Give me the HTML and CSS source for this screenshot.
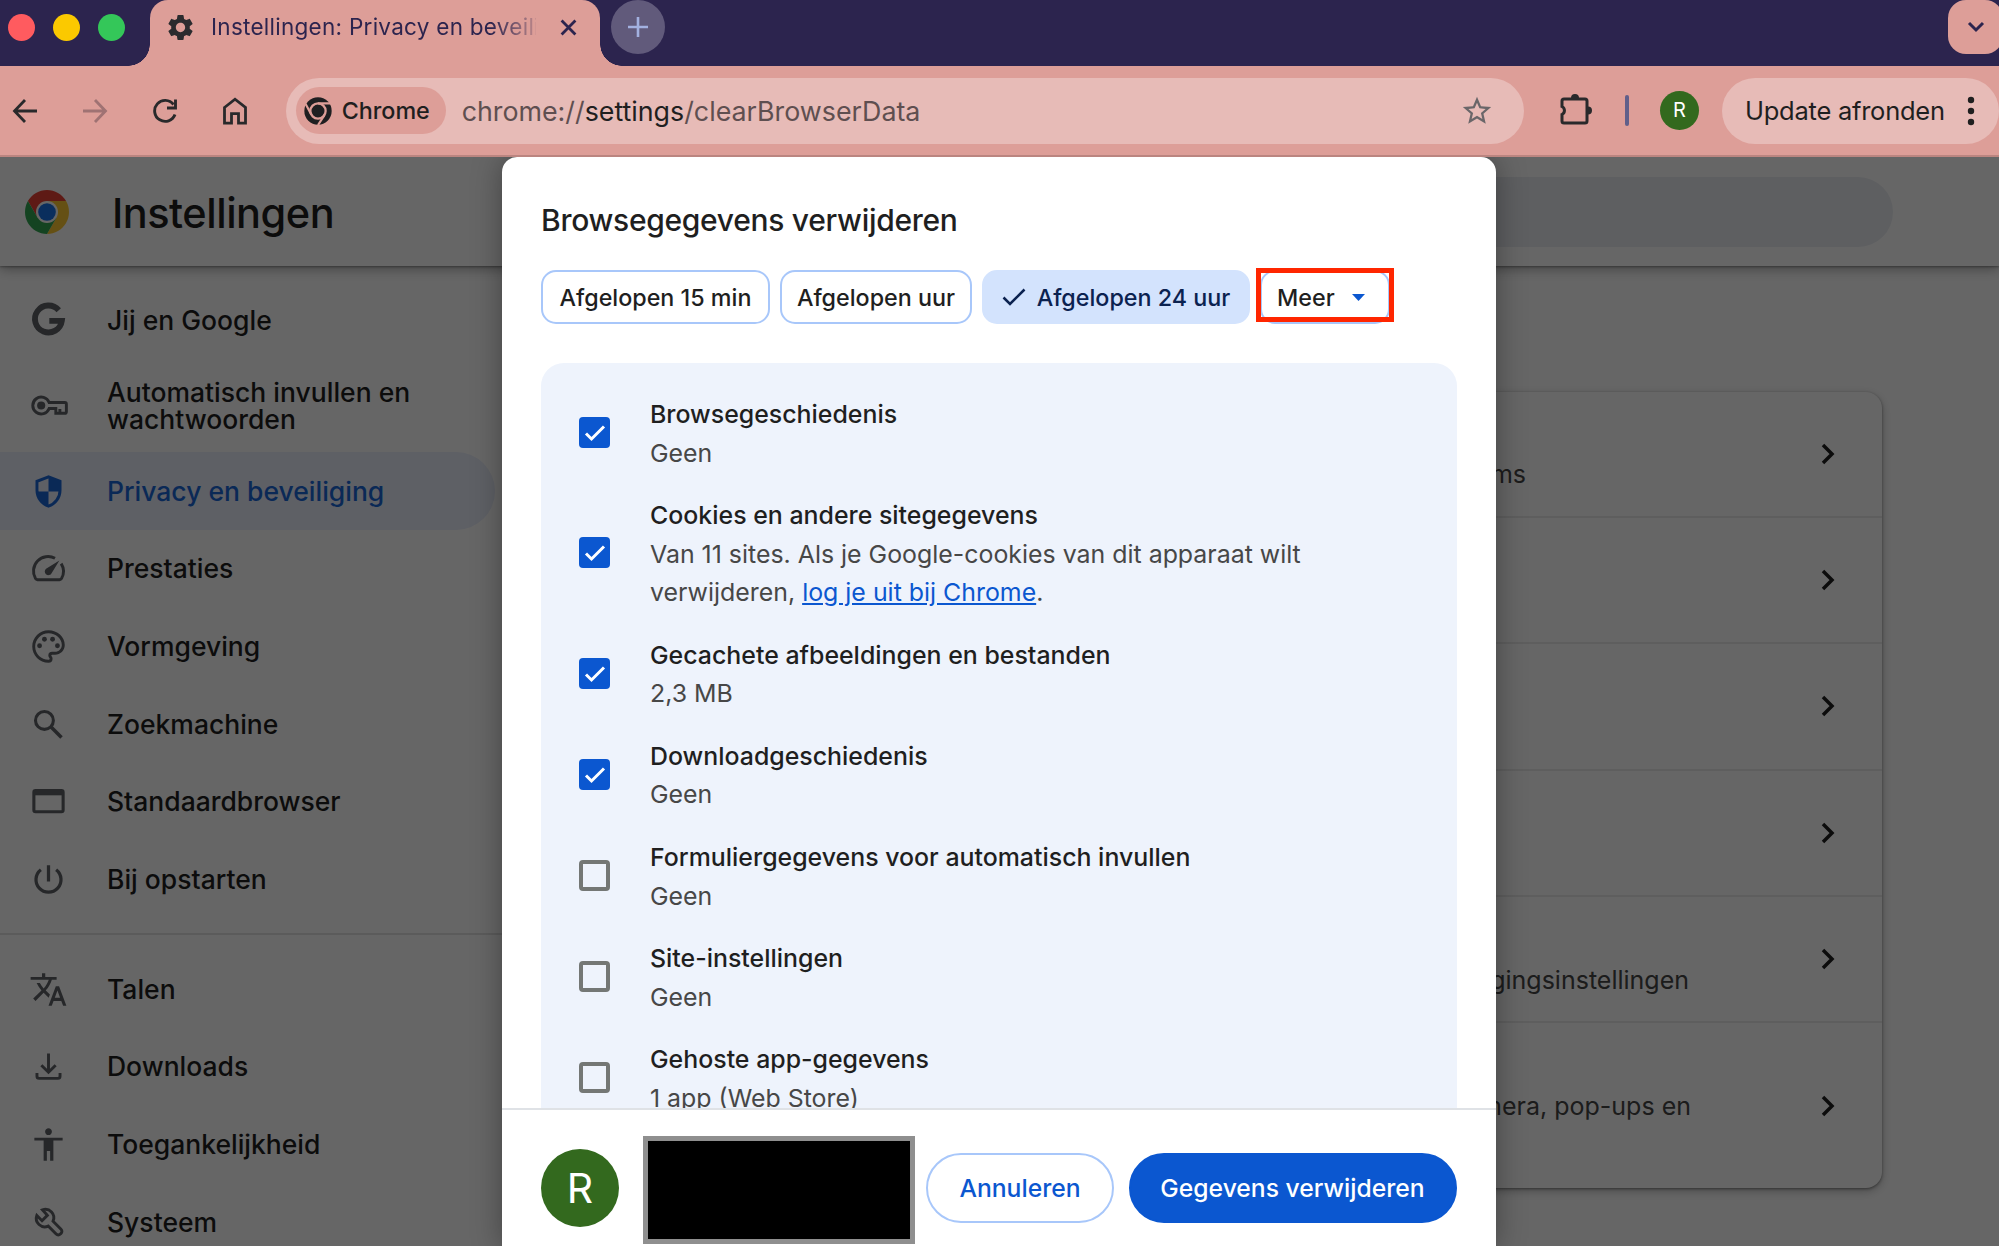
FILE: index.html
```
<!DOCTYPE html>
<html lang="nl">
<head>
    <meta charset="UTF-8" />
    <meta name="viewport" content="width=device-width, initial-scale=1.0" />
    <title>Instellingen: Privacy en beveiliging</title>
    <link rel="stylesheet" href="styles.css">
</head>
<body>
    <div class="tabstrip">
        <div class="lights">
            <span class="light red"></span>
            <span class="light yellow"></span>
            <span class="light green"></span>
        </div>
        <div class="tab">
            <svg class="tab-icon" viewBox="0 0 24 24"><path fill="#2b2b2e" d="M19.14 12.94c.04-.3.06-.61.06-.94 0-.32-.02-.64-.07-.94l2.03-1.58c.18-.14.23-.41.12-.61l-1.92-3.32c-.12-.22-.37-.29-.59-.22l-2.39.96c-.5-.38-1.03-.7-1.62-.94L14.4 2.81c-.04-.24-.24-.41-.48-.41h-3.84c-.24 0-.43.17-.47.41l-.36 2.54c-.59.24-1.13.57-1.62.94l-2.39-.96c-.22-.08-.47 0-.59.22L2.74 8.87c-.12.21-.08.47.12.61l2.03 1.58c-.05.3-.09.63-.09.94s.02.64.07.94l-2.03 1.58c-.18.14-.23.41-.12.61l1.92 3.32c.12.22.37.29.59.22l2.39-.96c.5.38 1.03.7 1.62.94l.36 2.54c.05.24.24.41.48.41h3.84c.24 0 .44-.17.47-.41l.36-2.54c.59-.24 1.13-.56 1.62-.94l2.39.96c.22.08.47 0 .59-.22l1.92-3.32c.12-.22.07-.47-.12-.61l-2.01-1.58zM12 15.6c-1.98 0-3.6-1.62-3.6-3.6s1.62-3.6 3.6-3.6 3.6 1.62 3.6 3.6-1.62 3.6-3.6 3.6z"/></svg>
            <span class="tab-title">Instellingen: Privacy en beveiliging</span>
            <svg class="tab-close" viewBox="0 0 16 16"><path d="M1.5 1.5l13 13M14.5 1.5l-13 13" stroke="#2c244e" stroke-width="2.6"/></svg>
        </div>
        <div class="new-tab">
            <svg width="20" height="20" viewBox="0 0 20 20"><path d="M10 0v20M0 10h20" stroke="#a3b1e0" stroke-width="2.6"/></svg>
        </div>
        <div class="tab-search">
            <svg width="18" height="12" viewBox="0 0 18 12"><path d="M2 2l7 7 7-7" fill="none" stroke="#2c244e" stroke-width="3"/></svg>
        </div>
    </div>

    <div class="toolbar">
        <div class="nav-buttons">
            <svg width="26" height="26" viewBox="0 0 26 26"><path d="M25 13H3M13 2L2.500 13 13 24" fill="none" stroke="#29292b" stroke-width="2.8"/></svg>
            <svg width="26" height="26" viewBox="0 0 26 26"><path d="M1 13h22M13 2l10.500 11L13 24" fill="none" stroke="#9f7273" stroke-width="2.8"/></svg>
            <svg width="26" height="26" viewBox="0 0 26 26"><path d="M23 16.500A10.500 10.500 0 1 1 21.500 6.500M23.500 1.500v8.500H15" fill="none" stroke="#29292b" stroke-width="2.9"/></svg>
            <svg width="26" height="28" viewBox="0 0 26 28"><path d="M2.500 10.500L13 2.200l10.500 8.300v15.700h-7v-9.500h-7v9.500h-7z" fill="none" stroke="#29292b" stroke-width="2.8"/></svg>
        </div>
        <div class="omnibox">
            <div class="chip-chrome">
                <svg width="28" height="28" viewBox="-22 -22 44 44">
                    <circle r="21.500" fill="#1f1f21"/>
                    <circle r="12" fill="none" stroke="#dd9e98" stroke-width="3.600"/>
                    <path d="M0-12h19M10.400 6L0 22M-10.400 6l-9-17" stroke="#dd9e98" stroke-width="3.400"/>
                </svg>
                <span>Chrome</span>
            </div>
            <span class="url">chrome://<b>settings</b>/clearBrowserData</span>
            <svg class="star" width="34" height="34" viewBox="0 0 24 24"><path fill="#6a6669" d="M22 9.240l-7.190-.62L12 2 9.190 8.630 2 9.240l5.460 4.730L5.820 21 12 17.270 18.180 21l-1.630-7.030L22 9.240zM12 15.400l-3.760 2.270 1-4.280-3.320-2.880 4.380-.38L12 6.100l1.710 4.040 4.380.38-3.320 2.880 1 4.280L12 15.400z"/></svg>
        </div>
        <svg class="puzzle" width="32" height="32" viewBox="0 0 32 32">
            <path d="M4 6h21a2 2 0 0 1 2 2v20a2 2 0 0 1-2 2H4a2 2 0 0 1-2-2v-6.500a4.500 4.500 0 0 0 0-8V8a2 2 0 0 1 2-2z" fill="none" stroke="#29292b" stroke-width="3"/>
            <path d="M11 5a4 4 0 0 1 8 0zM28 13.500a4 4 0 0 1 0 8z" fill="#29292b"/>
        </svg>
        <span class="separator"></span>
        <span class="avatar-small">R</span>
        <div class="update">
            <span>Update afronden</span>
            <svg width="8" height="32" viewBox="0 0 8 32" fill="#1f1f1f"><circle cx="4" cy="5" r="3.200"/><circle cx="4" cy="16" r="3.200"/><circle cx="4" cy="27" r="3.200"/></svg>
        </div>
    </div>

    <div class="page">
        <header class="page-header">
            <svg width="44" height="44" viewBox="-22 -22 44 44">
                <path fill="#ea4335" d="M-19.050-11A22 22 0 0 1 19.050-11L0-11-9.530 5.500z"/>
                <path fill="#fcc934" d="M19.050-11A22 22 0 0 1 0 22L9.530 5.500 0-11z"/>
                <path fill="#34a853" d="M0 22A22 22 0 0 1-19.050-11L-9.530 5.500 9.530 5.500z"/>
                <circle r="11" fill="#fff"/>
                <circle r="8.800" fill="#1a73e8"/>
            </svg>
            <h1>Instellingen</h1>
            <div class="search"></div>
        </header>

        <div class="content">
            <nav class="menu">
                <a class="item">
                    <svg viewBox="0 0 24 24"><path d="M18.300 5.700A8.300 8.300 0 1 0 20.200 12.200H12.500" fill="none" stroke="#5f6368" stroke-width="3.600"/></svg>
                    <span>Jij en Google</span>
                </a>
                <a class="item tall">
                    <svg viewBox="0 0 24 24"><path d="M12.400 10.200a5.200 5.200 0 1 0 0 3.600h4.100v3h5.500a1 1 0 0 0 1-1v-4.600a1 1 0 0 0-1-1zM19 16.800v-2.600" fill="none" stroke="#5f6368" stroke-width="1.800"/><circle cx="7.500" cy="12" r="2.500" fill="#5f6368"/></svg>
                    <span>Automatisch invullen en<br>wachtwoorden</span>
                </a>
                <a class="item selected">
                    <svg viewBox="0 0 24 24"><path d="M12 3L4.900 5.700v5.500c0 4.500 3 8.600 7.100 9.800 4.100-1.200 7.100-5.300 7.100-9.800V5.700z" fill="none" stroke="#1a67d8" stroke-width="1.800"/><path d="M12 3v9h7c.2-2 .1-4 .1-6.300zM12 12v9c-4-1.300-6.600-4.500-7.100-9z" fill="#1a67d8"/></svg>
                    <span>Privacy en beveiliging</span>
                </a>
                <a class="item">
                    <svg viewBox="0 0 24 24"><path d="M16 5.700A9 9 0 0 0 4 18.200a1.500 1.500 0 0 0 1.200.7h13.600a1.500 1.500 0 0 0 1.200-.7 9 9 0 0 0-.2-9.200" fill="none" stroke="#5f6368" stroke-width="1.800"/><path d="M18.700 7l-4.900 8a2.200 2.200 0 1 1-3.300-2.800z" fill="#5f6368"/></svg>
                    <span>Prestaties</span>
                </a>
                <a class="item">
                    <svg viewBox="0 0 24 24" fill="#5f6368"><path d="M12 22C6.490 22 2 17.510 2 12S6.490 2 12 2s10 4.040 10 9c0 3.310-2.690 6-6 6h-1.770c-.28 0-.5.22-.5.5 0 .12.05.23.13.33.41.47.64 1.060.64 1.670A2.500 2.500 0 0 1 12 22zm0-18.200c-4.500 0-8.200 3.700-8.200 8.200s3.700 8.200 8.200 8.200c.4 0 .7-.3.700-.7a.7.7 0 0 0-.2-.5c-.4-.5-.6-1-.6-1.500a2.300 2.300 0 0 1 2.300-2.300H16c2.300 0 4.200-1.900 4.200-4.200 0-4-3.700-7.200-8.200-7.200z"/><circle cx="6.500" cy="11.500" r="1.500"/><circle cx="9.500" cy="7.500" r="1.500"/><circle cx="14.500" cy="7.500" r="1.500"/><circle cx="17.500" cy="11.500" r="1.500"/></svg>
                    <span>Vormgeving</span>
                </a>
                <a class="item">
                    <svg viewBox="0 0 24 24"><circle cx="9.500" cy="9.500" r="5.500" fill="none" stroke="#5f6368" stroke-width="1.900"/><path d="M13.600 13.600l6.400 6.400" stroke="#5f6368" stroke-width="2.200"/></svg>
                    <span>Zoekmachine</span>
                </a>
                <a class="item">
                    <svg viewBox="0 0 24 24"><rect x="3" y="5.300" width="18" height="13" rx="1" fill="none" stroke="#5f6368" stroke-width="1.900"/><path d="M3 5h18v3.200H3z" fill="#5f6368"/></svg>
                    <span>Standaardbrowser</span>
                </a>
                <a class="item">
                    <svg viewBox="0 0 24 24"><path d="M12 3.300v10M7.300 6a7.700 7.700 0 1 0 9.400 0" fill="none" stroke="#5f6368" stroke-width="2"/></svg>
                    <span>Bij opstarten</span>
                </a>
                <hr class="menu-divider">
                <a class="item">
                    <svg viewBox="0 0 24 24"><path fill="#5f6368" d="M12.870 15.070l-2.540-2.510.03-.03c1.740-1.940 2.980-4.170 3.710-6.530H17V4.300h-7V2H8v2.300H1v1.700h11.170C11.500 7.920 10.440 9.750 9 11.350 8.070 10.320 7.300 9.190 6.690 8h-2c.73 1.630 1.730 3.170 2.980 4.560l-5.090 5.020L4 19l5-5 3.110 3.110.76-2.040zM18.500 10h-2L12 22h2l1.120-3h4.750L21 22h2l-4.500-12zm-2.620 7l1.620-4.330L19.120 17h-3.240z"/></svg>
                    <span>Talen</span>
                </a>
                <a class="item">
                    <svg viewBox="0 0 24 24"><path d="M12 4v11.300M7.600 11.200l4.400 4.300 4.400-4.300M4.900 16v2a1.300 1.300 0 0 0 1.300 1.300h11.600a1.300 1.300 0 0 0 1.300-1.300v-2" fill="none" stroke="#5f6368" stroke-width="1.800"/></svg>
                    <span>Downloads</span>
                </a>
                <a class="item">
                    <svg viewBox="0 0 24 24"><path fill="#5f6368" d="M12 2c1.100 0 2.100.9 2.100 2.100s-1 2.100-2.100 2.100-2.100-.9-2.100-2.100S10.900 2 12 2zm8.700 7.500H15V22h-2v-6h-2v6H9V9.500H3.300V7.900h17.400z"/></svg>
                    <span>Toegankelijkheid</span>
                </a>
                <a class="item">
                    <svg viewBox="0 0 24 24"><path d="M8.300 4.200a5.200 5.200 0 0 1 6.500 7l4.900 4.900a1.800 1.800 0 0 1 0 2.600l-.4.4a1.800 1.800 0 0 1-2.600 0l-4.900-4.900a5.200 5.200 0 0 1-7-6.500l3.200 3.200 3.300-3.300z" fill="none" stroke="#5f6368" stroke-width="1.800"/></svg>
                    <span>Systeem</span>
                </a>
            </nav>

            <main class="card">
                <div class="row">
                    <span class="sub second-line end-1">ms</span>
                    <svg class="chevron" viewBox="0 0 24 24"><path d="M7 3l9 9-9 9"/></svg>
                </div>
                <div class="row"><svg class="chevron" viewBox="0 0 24 24"><path d="M7 3l9 9-9 9"/></svg></div>
                <div class="row"><svg class="chevron" viewBox="0 0 24 24"><path d="M7 3l9 9-9 9"/></svg></div>
                <div class="row"><svg class="chevron" viewBox="0 0 24 24"><path d="M7 3l9 9-9 9"/></svg></div>
                <div class="row">
                    <span class="sub second-line end-2">gingsinstellingen</span>
                    <svg class="chevron" viewBox="0 0 24 24"><path d="M7 3l9 9-9 9"/></svg>
                </div>
                <div class="row last">
                    <span class="sub end-3">mera, pop-ups en</span>
                    <svg class="chevron" viewBox="0 0 24 24"><path d="M7 3l9 9-9 9"/></svg>
                </div>
            </main>
        </div>

        <!-- modal on top of the dimmed page -->
        <div class="backdrop">
            <div class="dialog">
                <h2>Browsegegevens verwijderen</h2>
                <div class="periods">
                    <button class="period">Afgelopen 15 min</button>
                    <button class="period">Afgelopen uur</button>
                    <button class="period active">
                        <svg width="24" height="18" viewBox="0 0 24 18"><path d="M1.500 9.500l6.500 6.500L22.500 1.500" fill="none" stroke="#0b2250" stroke-width="2.500"/></svg>
                        Afgelopen 24 uur
                    </button>
                    <button class="period more">
                        Meer
                        <svg width="13" height="7" viewBox="0 0 13 7"><path d="M0 0h13L6.500 7z" fill="#0b57d0"/></svg>
                        <span class="marker"></span>
                    </button>
                </div>

                <div class="options">
                    <div class="option">
                        <span class="box checked"><svg viewBox="0 0 31 31"><path d="M7 16.500l5.500 5.500L25 9.500"/></svg></span>
                        <div><p class="name">Browsegeschiedenis</p><p>Geen</p></div>
                    </div>
                    <div class="option">
                        <span class="box checked"><svg viewBox="0 0 31 31"><path d="M7 16.500l5.500 5.500L25 9.500"/></svg></span>
                        <div><p class="name">Cookies en andere sitegegevens</p><p>Van 11 sites. Als je Google-cookies van dit apparaat wilt<br>verwijderen, <a>log je uit bij Chrome</a>.</p></div>
                    </div>
                    <div class="option">
                        <span class="box checked"><svg viewBox="0 0 31 31"><path d="M7 16.500l5.500 5.500L25 9.500"/></svg></span>
                        <div><p class="name">Gecachete afbeeldingen en bestanden</p><p>2,3 MB</p></div>
                    </div>
                    <div class="option">
                        <span class="box checked"><svg viewBox="0 0 31 31"><path d="M7 16.500l5.500 5.500L25 9.500"/></svg></span>
                        <div><p class="name">Downloadgeschiedenis</p><p>Geen</p></div>
                    </div>
                    <div class="option">
                        <span class="box"></span>
                        <div><p class="name">Formuliergegevens voor automatisch invullen</p><p>Geen</p></div>
                    </div>
                    <div class="option">
                        <span class="box"></span>
                        <div><p class="name">Site-instellingen</p><p>Geen</p></div>
                    </div>
                    <div class="option">
                        <span class="box"></span>
                        <div><p class="name">Gehoste app-gegevens</p><p>1 app (Web Store)</p></div>
                    </div>
                </div>

                <div class="footer">
                    <span class="avatar">R</span>
                    <span class="redacted"></span>
                    <button class="cancel">Annuleren</button>
                    <button class="confirm">Gegevens verwijderen</button>
                </div>
            </div>
        </div>
    </div>
</body>
</html>
```
FILE: styles.css
```
* {
    box-sizing: border-box;
}

body {
    margin: 0;
    width: 1999px;
    height: 1247px;
    overflow: hidden;
    background: #fff;
    font-family: Inter, "Liberation Sans", sans-serif;
    color: #1f1f1f;
}

svg {
    display: block;
    flex: none;
}

/* Tab strip */

.tabstrip {
    display: flex;
    height: 66px;
    background: #2c244e;
}

.lights {
    display: flex;
    gap: 18px;
    width: 150px;
    padding: 14px 0 0 8px;
}

.light {
    width: 27px;
    height: 27px;
    border-radius: 50%;
}

.light.red { background: #ff5b5f; }
.light.yellow { background: #fbc900; }
.light.green { background: #34c759; }

.tab {
    position: relative;
    display: flex;
    align-items: center;
    width: 450px;
    height: 66px;
    padding: 0 23px 12px 15px;
    background: #dd9e98;
    border-radius: 18px 18px 0 0;
}

.tab::before,
.tab::after {
    content: '';
    position: absolute;
    bottom: 0;
    width: 22px;
    height: 22px;
}

.tab::before {
    left: -22px;
    background: radial-gradient(circle at 0 0, transparent 21.500px, #dd9e98 22px);
}

.tab::after {
    right: -22px;
    background: radial-gradient(circle at 100% 0, transparent 21.500px, #dd9e98 22px);
}

.tab-icon {
    width: 31px;
    height: 31px;
}

.tab-title {
    width: 325px;
    margin: -2px 0 0 15px;
    overflow: hidden;
    white-space: nowrap;
    font-size: 22.500px;
    letter-spacing: 0.27px;
    color: #2c244e;
    -webkit-mask-image: linear-gradient(to right, #000 280px, transparent 335px);
    mask-image: linear-gradient(to right, #000 280px, transparent 335px);
}

.tab-close {
    width: 17px;
    height: 17px;
    margin-left: auto;
}

.new-tab {
    display: flex;
    align-items: center;
    justify-content: center;
    width: 54px;
    height: 54px;
    margin-left: 11px;
    border-radius: 50%;
    background: #615a7b;
}

.tab-search {
    display: flex;
    align-items: center;
    justify-content: center;
    width: 55px;
    height: 54px;
    margin: 0 -4px 0 auto;
    border-radius: 18px;
    background: #dd9e98;
}

/* Toolbar */

.toolbar {
    display: flex;
    align-items: center;
    height: 91px;
    background: #dd9e98;
    border-bottom: 2px solid #bb8580;
}

.nav-buttons {
    display: flex;
    align-items: center;
    gap: 44px;
    width: 286px;
    padding-left: 12px;
}

.omnibox {
    display: flex;
    align-items: center;
    width: 1240px;
    height: 66px;
    padding: 0 30px 0 10px;
    border-radius: 33px;
    background: #e7bbb7;
}

.chip-chrome {
    display: flex;
    align-items: center;
    gap: 10px;
    width: 150px;
    height: 47px;
    padding-left: 8px;
    border-radius: 24px;
    background: #dd9e98;
    font-size: 23.300px;
    font-weight: 500;
}

.url {
    margin-left: 16px;
    font-size: 26.800px;
    color: #5f4f50;
}

.url b {
    font-weight: 400;
    color: #1f1f1f;
}

.star {
    margin-left: auto;
}

.puzzle {
    margin: -4px 0 0 36px;
}

.separator {
    width: 4px;
    height: 31px;
    margin-left: 33px;
    border-radius: 2px;
    background: #615f8a;
}

.avatar-small {
    width: 39px;
    height: 39px;
    margin-left: 31px;
    border-radius: 50%;
    background: #33691e;
    color: #fff;
    font-size: 20px;
    line-height: 39px;
    text-align: center;
}

.update {
    display: flex;
    align-items: center;
    width: 277px;
    height: 66px;
    margin-left: 23px;
    padding-left: 23px;
    border-radius: 33px;
    background: #e7bbb7;
    font-size: 25.500px;
    letter-spacing: -0.250px;
    white-space: nowrap;
    flex: none;
}

.update svg {
    margin-left: 22px;
}

/* Settings page */

.page {
    position: relative;
    height: 1088.500px;
    overflow: hidden;
    background: #fff;
}

.page-header {
    display: flex;
    align-items: center;
    height: 109px;
    padding: 0 106px 0 25px;
    box-shadow: 0 2px 12px rgba(0, 0, 0, 0.400), 0 1px 2px rgba(0, 0, 0, 0.300);
}

.page-header h1 {
    margin: 2px 0 0 43px;
    font-size: 41.500px;
    font-weight: 550;
    letter-spacing: -0.500px;
}

.search {
    width: 1320px;
    height: 70px;
    margin-left: auto;
    border-radius: 35px;
    background: #ebeef3;
}

.content {
    display: flex;
    justify-content: space-between;
}

.menu {
    width: 502px;
    padding-top: 15.500px;
}

.item {
    display: flex;
    align-items: center;
    gap: 39px;
    width: 495px;
    height: 77.700px;
    padding-left: 29px;
    border-radius: 0 39px 39px 0;
    font-size: 26.500px;
    font-weight: 550;
    line-height: 27px;
}

.item svg {
    width: 39px;
    height: 39px;
}

.item.tall {
    height: 93px;
}

.item.selected {
    background: #ebeffc;
    color: #1a67d8;
}

.menu-divider {
    margin: 15px 0;
    border: 0;
    border-top: 2px solid #e3e3e3;
}

.card {
    width: 1321px;
    height: 796px;
    margin: 125.500px 117px 0 0;
    border-radius: 16px;
    box-shadow: 0 1px 3px rgba(0, 0, 0, 0.400), 0 3px 10px rgba(0, 0, 0, 0.250);
}

.row {
    display: flex;
    align-items: center;
    justify-content: flex-end;
    height: 126.400px;
    padding-right: 42px;
    border-bottom: 2px solid #ececec;
}

.row.last {
    height: 165px;
    border-bottom: 0;
}

.sub {
    font-size: 25px;
    line-height: 38px;
    color: #474747;
}

/* the first line is covered by the dialog */
.second-line {
    padding-top: 41px;
}

.end-1 { margin-right: 290px; }
.end-2 { margin-right: 127px; }
.end-3 { margin-right: 125px; }

.chevron {
    width: 24px;
    height: 24px;
    fill: none;
    stroke: #1f1f1f;
    stroke-width: 3.500px;
}

/* Dialog */

.backdrop {
    position: absolute;
    inset: 0;
    display: flex;
    padding-left: 502px;
    background: rgba(0, 0, 0, 0.600);
}

.dialog {
    display: flex;
    flex-direction: column;
    width: 993.500px;
    height: 1091px;
    border-radius: 15px 15px 0 0;
    background: #fff;
    box-shadow: 0 0 30px rgba(0, 0, 0, 0.350);
    flex: none;
}

.dialog h2 {
    margin: 43px 0 30px 39px;
    font-size: 30px;
    font-weight: 550;
    line-height: 40px;
    letter-spacing: -0.300px;
}

.periods {
    display: flex;
    gap: 10px;
    margin-left: 39px;
}

.period {
    display: flex;
    align-items: center;
    justify-content: center;
    width: 229px;
    height: 54px;
    padding: 0;
    border: 2px solid #a8c7fa;
    border-radius: 15px;
    background: #fff;
    color: #1f1f1f;
    font-family: inherit;
    font-size: 23.300px;
    font-weight: 550;
    white-space: nowrap;
}

.period:nth-child(2) {
    width: 192px;
}

.period.active {
    gap: 11px;
    width: 268px;
    border-color: #d3e3fd;
    background: #d3e3fd;
    color: #0b2250;
}

.period.more {
    position: relative;
    justify-content: flex-start;
    gap: 17px;
    width: 130px;
    padding-left: 15px;
}

.marker {
    position: absolute;
    inset: -4px -6px 0 -6px;
    border: 5px solid #ff2600;
}

.options {
    flex: 1;
    min-height: 0;
    margin: 39px 39px 0;
    padding-top: 20px;
    overflow: hidden;
    border-radius: 23px 23px 0 0;
    background: #eef3fc;
}

.option {
    display: flex;
    align-items: center;
    gap: 40px;
    padding: 11.660px 0 11.660px 38px;
}

.option p {
    margin: 0;
    font-size: 24.900px;
    line-height: 38.860px;
    color: #474747;
}

.option .name {
    color: #1f1f1f;
    font-weight: 550;
}

.option a {
    color: #0b57d0;
    text-decoration: underline;
}

.box {
    width: 31px;
    height: 31px;
    margin-bottom: 2px;
    border: 4px solid #747775;
    border-radius: 4px;
    flex: none;
}

.box.checked {
    border: 0;
    background: #0b57d0;
}

.box path {
    fill: none;
    stroke: #fff;
    stroke-width: 3px;
}

.footer {
    display: flex;
    align-items: flex-start;
    height: 140px;
    padding: 20px 39px 0;
    border-top: 2px solid #dfe2e6;
    flex: none;
}

.avatar {
    width: 78px;
    height: 78px;
    margin-top: 19px;
    border-radius: 50%;
    background: #33691e;
    color: #fff;
    font-size: 41px;
    line-height: 78px;
    text-align: center;
    flex: none;
}

.redacted {
    width: 272px;
    height: 108px;
    margin: 6px 0 0 24px;
    border: 5px solid #8f8f8f;
    background: #000;
    flex: none;
}

.footer button {
    height: 70px;
    margin-top: 23px;
    padding: 0;
    border: 2px solid #a8c7fa;
    border-radius: 35px;
    background: #fff;
    color: #0b57d0;
    font-family: inherit;
    font-size: 24.700px;
    font-weight: 550;
    flex: none;
}

.footer .cancel {
    width: 188px;
    margin-left: 11px;
}

.footer .confirm {
    width: 328px;
    margin-left: auto;
    border-color: #0b57d0;
    background: #0b57d0;
    color: #fff;
}
```
